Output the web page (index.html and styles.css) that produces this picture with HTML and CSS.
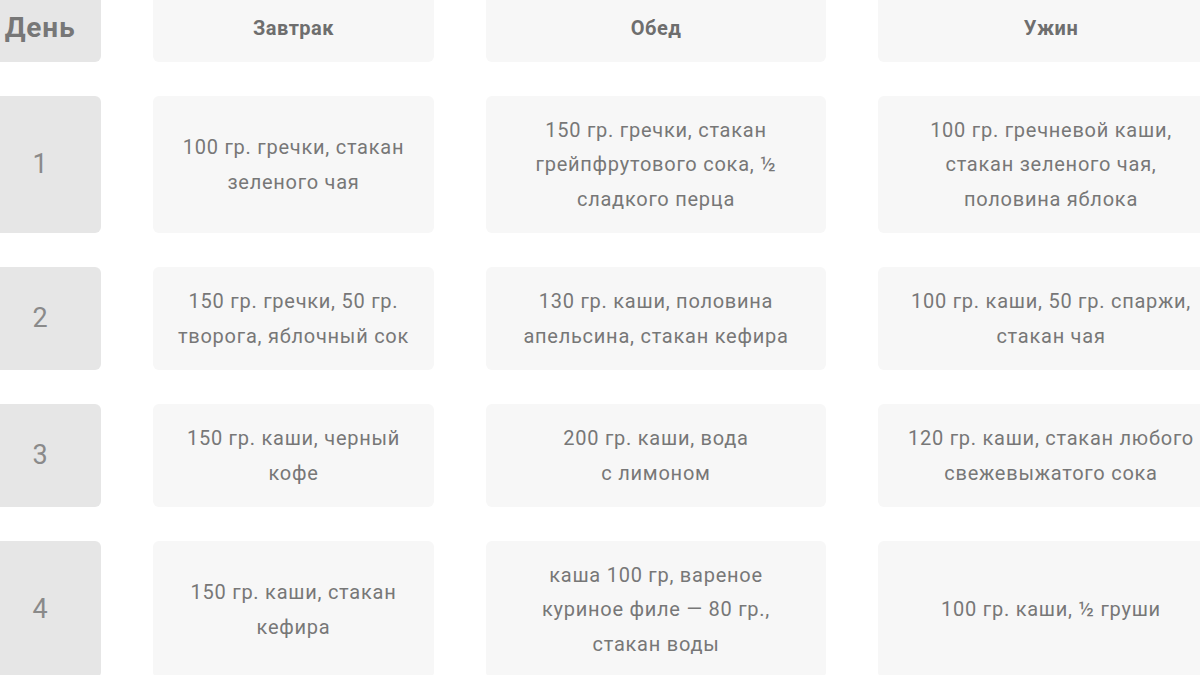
FILE: index.html
```html
<!DOCTYPE html>
<html lang="ru">
<head>
<meta charset="utf-8">
<link rel="stylesheet" href="styles.css">
</head>
<body>
<div class="table">
  <div class="cell day head">День</div>
  <div class="cell head">Завтрак</div>
  <div class="cell head">Обед</div>
  <div class="cell head">Ужин</div>

  <div class="cell day r1">1</div>
  <div class="cell">100 гр. гречки, стакан<br>зеленого чая</div>
  <div class="cell">150 гр. гречки, стакан<br>грейпфрутового сока, ½<br>сладкого перца</div>
  <div class="cell">100 гр. гречневой каши,<br>стакан зеленого чая,<br>половина яблока</div>

  <div class="cell day">2</div>
  <div class="cell">150 гр. гречки, 50 гр.<br>творога, яблочный сок</div>
  <div class="cell">130 гр. каши, половина<br>апельсина, стакан кефира</div>
  <div class="cell">100 гр. каши, 50 гр. спаржи,<br>стакан чая</div>

  <div class="cell day">3</div>
  <div class="cell">150 гр. каши, черный<br>кофе</div>
  <div class="cell">200 гр. каши, вода<br>с лимоном</div>
  <div class="cell">120 гр. каши, стакан любого<br>свежевыжатого сока</div>

  <div class="cell day">4</div>
  <div class="cell">150 гр. каши, стакан<br>кефира</div>
  <div class="cell">каша 100 гр, вареное<br>куриное филе — 80 гр.,<br>стакан воды</div>
  <div class="cell">100 гр. каши, ½ груши</div>
</div>
</body>
</html>
```
FILE: styles.css
```css
html, body {
  margin: 0;
  padding: 0;
  background: #ffffff;
  overflow: hidden;
  width: 1200px;
  height: 675px;
}
.table {
  display: grid;
  grid-template-columns: 122px 281px 340px 346px;
  grid-template-rows: 67px 137px 103px 103px 137px;
  column-gap: 52px;
  row-gap: 34px;
  margin-left: -21px;
  margin-top: -5px;
  width: max-content;
}
.cell {
  background: #f7f7f7;
  border-radius: 6px;
  display: flex;
  align-items: center;
  justify-content: center;
  text-align: center;
  font-family: Roboto, "Noto Sans", sans-serif;
  font-size: 20px;
  letter-spacing: 0.75px;
  line-height: 34.5px;
  color: #777777;
}
.cell.day {
  background: #e6e6e6;
  font-size: 27px;
  letter-spacing: 0;
  color: #8a8a8a;
}
.cell.head {
  font-weight: bold;
  font-size: 20px;
  letter-spacing: 0.5px;
  color: #6e6e6e;
  padding-bottom: 1px;
}
.cell.day.head {
  font-size: 28px;
  letter-spacing: 0.8px;
  color: #777777;
}
```
